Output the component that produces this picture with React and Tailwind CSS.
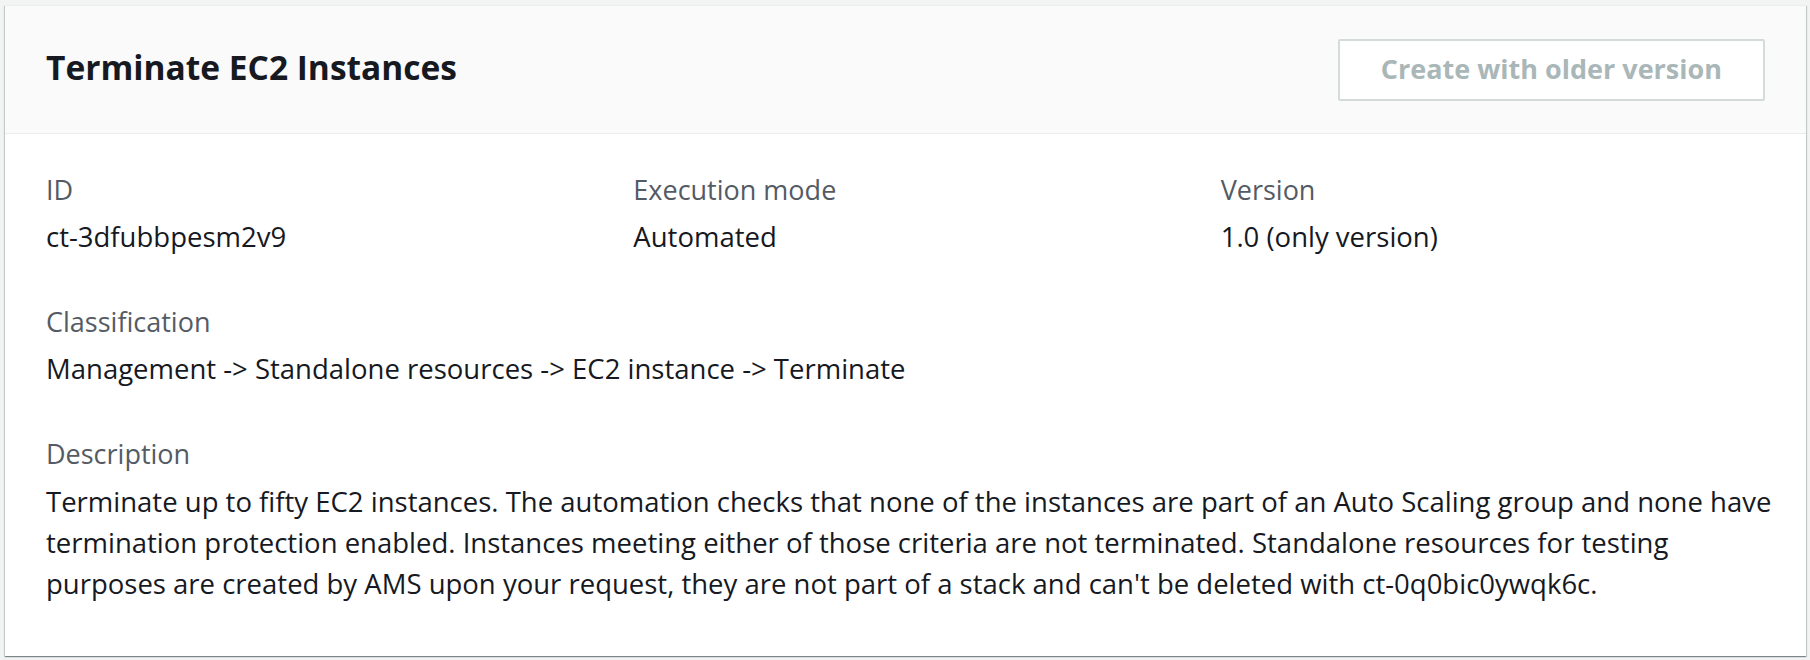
export default function App() {
  const Field = ({ label, children, className = "", lh = "leading-[40px]" }) => (
    <div className={className}>
      <div className="text-[27px] leading-[40px] text-[#545b64]">{label}</div>
      <div className={`mt-[7px] text-[27.5px] text-[#16191f] ${lh}`}>{children}</div>
    </div>
  );
  return (
    <div className="min-h-[660px] bg-[#f2f3f3] pt-[5px] pl-[5px] pr-[4px] pb-[7px] font-['Open_Sans',sans-serif]">
      <div className="bg-white border-t border-[#eaeded] shadow-[0_1px_1px_0_rgba(0,28,36,0.3),1px_1px_1px_0_rgba(0,28,36,0.15),-1px_1px_1px_0_rgba(0,28,36,0.15)]">
        <div className="flex h-[128px] items-center justify-between border-b border-[#eaeded] bg-[#fafafa] px-[41px]">
          <h2 className="mb-[4px] text-[33.5px] font-bold text-[#16191f]">Terminate EC2 Instances</h2>
          <button className="h-[62px] rounded-[2px] border-2 border-[#d5dbdb] bg-white px-[41px] text-[27px] font-bold text-[#aab7b8]">
            Create with older version
          </button>
        </div>
        <div className="px-[41px] pt-[36px] pb-[52px]">
          <div className="grid grid-cols-3 gap-x-[43px] gap-y-[45px]">
            <Field label="ID">ct-3dfubbpesm2v9</Field>
            <Field label="Execution mode">Automated</Field>
            <Field label="Version">1.0 (only version)</Field>
            <Field className="col-span-3" label="Classification">
              Management -&gt; Standalone resources -&gt; EC2 instance -&gt; Terminate
            </Field>
            <Field className="col-span-3" label="Description" lh="leading-[41px]">
              <span className="block whitespace-nowrap">
                Terminate up to fifty EC2 instances. The automation checks that none of the instances are part of an Auto Scaling group and none have
              </span>
              <span className="block whitespace-nowrap">
                termination protection enabled. Instances meeting either of those criteria are not terminated. Standalone resources for testing
              </span>
              <span className="block whitespace-nowrap">
                purposes are created by AMS upon your request, they are not part of a stack and can't be deleted with ct-0q0bic0ywqk6c.
              </span>
            </Field>
          </div>
        </div>
      </div>
    </div>
  );
}
